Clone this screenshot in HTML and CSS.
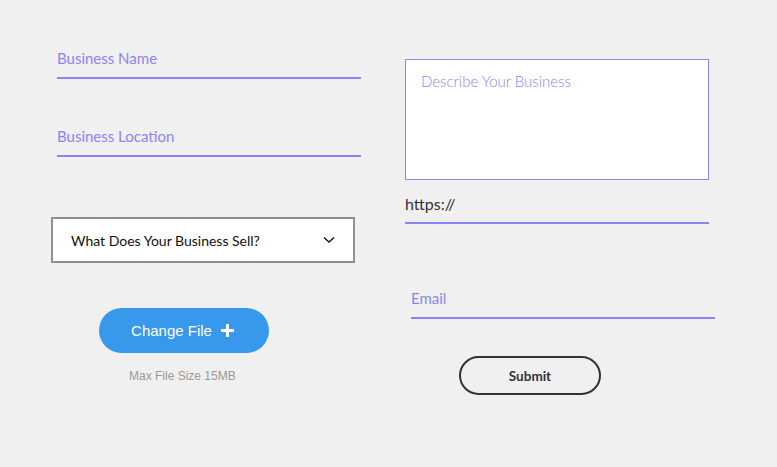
FILE: index.html
```html
<!DOCTYPE html>
<html>
<head>
<meta charset="utf-8">
<link rel="stylesheet" href="styles.css">
</head>
<body>
<div class="form">
  <div class="col left">
    <div class="field first"><span class="label">Business Name</span></div>
    <div class="field second"><span class="label">Business Location</span></div>
    <div class="select">
      <span class="select-text">What Does Your Business Sell?</span>
      <svg class="chev" width="12" height="8" viewBox="0 0 12 8"><polyline points="1,1.5 6,6 11,1.5" fill="none" stroke="#111" stroke-width="1.4"/></svg>
    </div>
    <button class="upload">Change File
      <svg class="plus" width="13" height="13" viewBox="0 0 13 13"><rect x="5" y="0" width="3" height="13" fill="#fff"/><rect x="0" y="5" width="13" height="3" fill="#fff"/></svg>
    </button>
    <div class="caption">Max File Size 15MB</div>
  </div>
  <div class="col right">
    <div class="textarea"><span class="placeholder">Describe Your Business</span></div>
    <div class="field url"><span class="value">https://</span></div>
    <div class="field email"><span class="label">Email</span></div>
    <button class="submit">Submit</button>
  </div>
</div>
</body>
</html>
```
FILE: styles.css
```css
html, body {
  margin: 0;
  padding: 0;
  background: #f0f0f0;
  width: 777px;
  height: 467px;
  overflow: hidden;
}
.form {
  display: flex;
  align-items: flex-start;
  font-family: "Lato", "Liberation Sans", sans-serif;
}
.col {
  display: flex;
  flex-direction: column;
  align-items: flex-start;
}
.left {
  margin-left: 51px;
  width: 310px;
  padding-top: 48px;
}
.right {
  margin-left: 44px;
  width: 310px;
  padding-top: 59px;
}
.field {
  width: 304px;
  border-bottom: 2px solid #8a85f6;
  box-sizing: border-box;
  line-height: 20px;
}
.label {
  color: #8a85f6;
  font-size: 15px;
}
.first {
  margin-left: 6px;
  padding-bottom: 9px;
}
.second {
  margin-left: 6px;
  margin-top: 47px;
  padding-bottom: 9px;
}
.select {
  margin-top: 60px;
  width: 304px;
  height: 46px;
  box-sizing: border-box;
  border: 2px solid #8f8f8f;
  background: #fff;
  display: flex;
  align-items: center;
  justify-content: space-between;
  padding: 0 18px 0 18px;
}
.select-text {
  font-size: 14px;
  color: #111;
}
.chev {
  display: block;
}
.upload {
  margin-top: 45px;
  margin-left: 48px;
  width: 170px;
  height: 45px;
  border: none;
  border-radius: 23px;
  background: #3899ec;
  color: #fff;
  font-family: "Liberation Sans", Arial, sans-serif;
  font-size: 15px;
  display: flex;
  align-items: center;
  justify-content: center;
  gap: 9px;
  padding: 0 3px 0 0;
}
.plus {
  display: block;
}
.caption {
  margin-top: 15px;
  margin-left: 78px;
  font-family: "Liberation Sans", Arial, sans-serif;
  font-size: 12px;
  line-height: 16px;
  color: #999;
}
.textarea {
  width: 304px;
  height: 121px;
  box-sizing: border-box;
  border: 1px solid #8a85f6;
  background: #fff;
  padding: 11px 15px;
}
.placeholder {
  font-size: 15px;
  font-weight: 300;
  color: #8a85f6;
  line-height: 20px;
}
.url {
  margin-top: 14px;
  padding-bottom: 8px;
}
.value {
  font-size: 16px;
  color: #333;
}
.email {
  margin-left: 6px;
  margin-top: 64px;
  padding-bottom: 9px;
}
.submit {
  margin-top: 37px;
  margin-left: 54px;
  width: 142px;
  height: 39px;
  box-sizing: border-box;
  border: 2px solid #333;
  border-radius: 20px;
  background: transparent;
  font-family: "Lato", sans-serif;
  font-weight: 700;
  font-size: 13.5px;
  color: #333;
}
```
